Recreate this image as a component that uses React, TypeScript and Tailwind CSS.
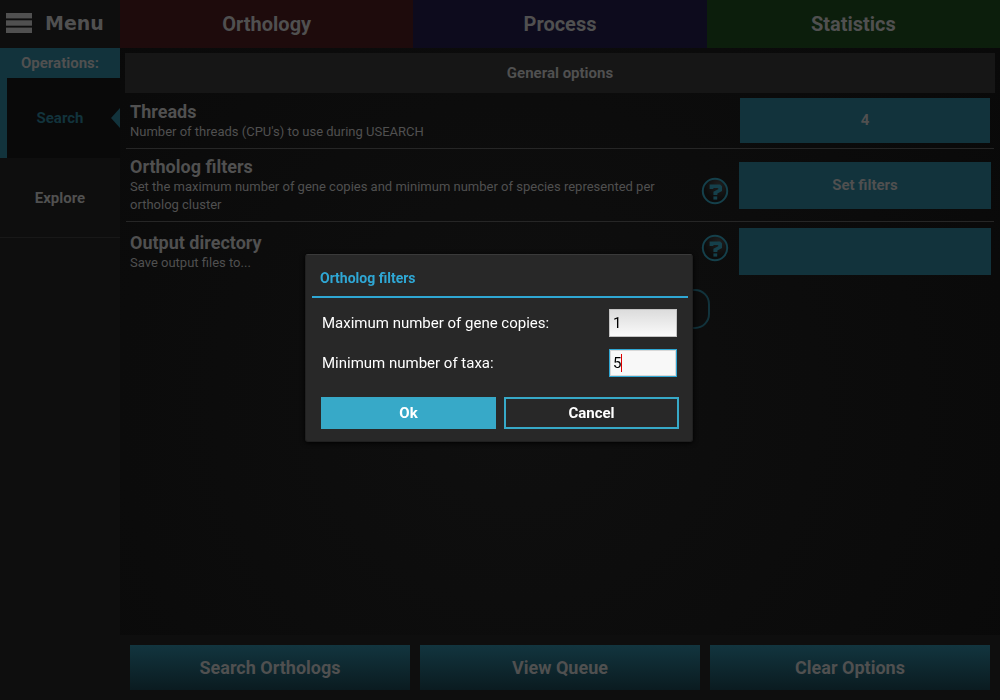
import type { ReactNode } from "react";

const tabs = [
  { label: "Orthology", tone: "bg-[#1e0b0c]" },
  { label: "Process", tone: "bg-[#0d0b1d]" },
  { label: "Statistics", tone: "bg-[#0c1e0c]" },
];

const actions = ["Search Orthologs", "View Queue", "Clear Options"];

function HelpButton({ className }: { className: string }) {
  return (
    <button type="button" aria-label="Help" className={`h-7 w-7 shrink-0 ${className}`}>
      <svg viewBox="0 0 28 28" className="h-7 w-7">
        <defs>
          <radialGradient id="helpFill" cx="65%" cy="25%" r="60%">
            <stop offset="0" stopColor="#1e1e1e" />
            <stop offset="1" stopColor="#0c0c0c" />
          </radialGradient>
        </defs>
        <circle cx="14" cy="14" r="12.2" fill="url(#helpFill)" stroke="#15404b" strokeWidth="2" />
        <path d="M8.6 7.4H19.2L21 9.2V14L16.4 16.6V18H12.4V14.8L17.2 12.2V10.9H12.4V12H8.6Z" fill="#15404b" />
        <rect x="12.4" y="19.4" width="3.8" height="3.2" fill="#15404b" />
      </svg>
    </button>
  );
}

function OptionRow({ title, text, className, children }: { title: string; text: string; className: string; children: ReactNode }) {
  return (
    <section className={`mx-px flex items-center pl-1 ${className}`}>
      <div className="min-w-0 flex-1 pr-10">
        <h2 className="text-[18px] leading-[22px] font-bold">{title}</h2>
        <p className="text-[13px] leading-[18px]">{text}</p>
      </div>
      {children}
    </section>
  );
}

function FilterDialog() {
  return (
    <div className="fixed inset-0 flex items-center justify-center pr-0.5 pb-1">
      <form
        role="dialog"
        aria-labelledby="dialog-title"
        className="w-[388px] rounded-[3px] border border-[#202020] border-t-[#3a3a3a] bg-[#282828] pt-[13px] pr-1 pb-3 pl-1.5 text-[15px] text-white shadow-[0_1px_5px_#000]"
      >
        <h2 id="dialog-title" className="border-b-2 border-[#2fa7d4] px-2 pb-2 text-[14px] leading-5 font-bold text-[#2fa7d4]">
          Ortholog filters
        </h2>
        <div className="mt-[11px] flex flex-col gap-3 pr-[11px] pl-2.5">
          <div className="flex h-7 items-center justify-between">
            <label htmlFor="copies">Maximum number of gene copies:</label>
            <input
              id="copies"
              defaultValue="1"
              className="h-7 w-[68px] border border-[#c4c4c4] bg-linear-to-b from-[#dcdcdc] to-[#fafafa] px-[3px] text-black outline-none"
            />
          </div>
          <div className="flex h-7 items-center justify-between">
            <label htmlFor="taxa">Minimum number of taxa:</label>
            <div className="relative">
              <input
                id="taxa"
                defaultValue="5"
                className="block h-7 w-[68px] border border-[#2fa7d4] bg-[#f8f8f8] px-[3px] text-black caret-transparent shadow-[inset_0_0_0_1px_#d8d8d8] outline-none"
              />
              <span className="absolute top-[5px] left-3 h-[18px] w-px bg-[#e00000]" />
            </div>
          </div>
        </div>
        <div className="mt-5 grid grid-cols-2 gap-2 pr-[9px] pl-[9px] font-bold">
          <button type="button" className="h-8 bg-[#37a9c8]">Ok</button>
          <button type="button" className="h-8 border-2 border-[#37a9c8]">Cancel</button>
        </div>
      </form>
    </div>
  );
}

export default function App() {
  return (
    <div className="flex min-h-screen bg-[#0e0e0e] text-[#505050] [font-family:Roboto,sans-serif]">
      <aside className="flex w-[120px] shrink-0 flex-col text-[15px] font-bold">
        <button type="button" className="flex h-12 items-center gap-[13px] pb-0.5 pl-1.5 [font-family:'DejaVu_Sans',sans-serif] text-[19px]">
          <svg viewBox="0 0 26 20" className="h-5 w-[26px]" fill="#505050">
            <rect width="26" height="5.4" />
            <rect y="7.3" width="26" height="5.4" />
            <rect y="14.6" width="26" height="5.4" />
          </svg>
          Menu
        </button>
        <div className="flex h-[30px] items-center justify-center bg-[#12333c]">Operations:</div>
        <button type="button" className="relative h-20 border-l-[7px] border-[#12333c] bg-[#090909] pr-[7px] text-[#12333c]">
          Search
          <svg viewBox="0 0 9 20" className="absolute top-[30px] right-0 h-5 w-[9px]">
            <path d="M9 0V20L0 10Z" fill="#12333c" />
          </svg>
        </button>
        <button type="button" className="h-20 border-b border-[#181818] pt-px">Explore</button>
      </aside>

      <div className="flex min-w-0 flex-1 flex-col">
        <nav className="grid h-12 grid-cols-3 text-[20px] font-bold">
          {tabs.map((tab) => (
            <button key={tab.label} type="button" className={tab.tone}>{tab.label}</button>
          ))}
        </nav>

        <main className="flex-1 bg-[radial-gradient(circle_at_45%_60%,#0f0f0f,#090909)] px-[5px] pt-[5px]">
          <h1 className="flex h-10 items-center justify-center bg-[#161616] text-[15px] font-bold">General options</h1>
          <OptionRow
            title="Threads"
            text="Number of threads (CPU's) to use during USEARCH"
            className="min-h-14 border-b border-[#262626] pr-1"
          >
            <button type="button" className="h-[45px] w-[250px] bg-[#12333c] text-[15px] font-bold">4</button>
          </OptionRow>
          <OptionRow
            title="Ortholog filters"
            text="Set the maximum number of gene copies and minimum number of species represented per ortholog cluster"
            className="min-h-[73px] border-b border-[#262626] pr-[3px]"
          >
            <HelpButton className="mr-2.5 mb-4 self-end" />
            <button type="button" className="h-[47px] w-[252px] bg-[#12333c] text-[15px] font-bold">Set filters</button>
          </OptionRow>
          <OptionRow title="Output directory" text="Save output files to..." className="min-h-[59px] pr-[3px]">
            <HelpButton className="mt-3 mr-2.5 self-start" />
            <button type="button" aria-label="Output directory" className="h-[47px] w-[252px] bg-[#12333c]" />
          </OptionRow>
          <div className="mt-2 flex justify-center">
            <button type="button" aria-label="More options" className="h-10 w-[300px] rounded-[15px] border-2 border-[#12333c]" />
          </div>
        </main>

        <footer className="grid grid-cols-3 gap-2.5 p-2.5 text-[18px] font-bold">
          {actions.map((action) => (
            <button key={action} type="button" className="h-[45px] bg-linear-to-b from-[#12353f] to-[#0a1b20]">{action}</button>
          ))}
        </footer>
      </div>

      <FilterDialog />
    </div>
  );
}
